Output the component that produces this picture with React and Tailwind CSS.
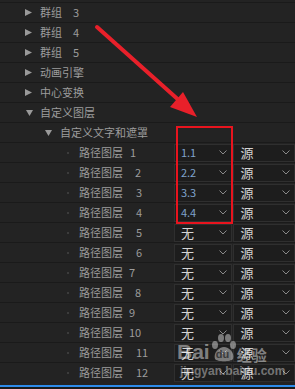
const font = { fontFamily: '"Noto Sans CJK SC", "Liberation Sans", sans-serif' }

function Tri({ down }) {
  return down ? (
    <svg width="7" height="7" viewBox="0 0 7 7" className="shrink-0">
      <path d="M0 1 L7 1 L3.5 7 Z" fill="#9a9a9a" />
    </svg>
  ) : (
    <svg width="7" height="7" viewBox="0 0 7 7" className="shrink-0">
      <path d="M0 0 L7 3.5 L0 7 Z" fill="#9a9a9a" />
    </svg>
  )
}

function Chevron() {
  return (
    <svg width="8" height="5" viewBox="0 0 8 5" className="shrink-0">
      <path d="M0.5 0.5 L4 4 L7.5 0.5" fill="none" stroke="#8a8a8a" strokeWidth="1" />
    </svg>
  )
}

function Select({ value, blue, w }) {
  return (
    <div className={`flex items-center justify-between h-[18px] bg-[#1d1d1d] border border-[#2f2f2f] pl-[6px] pr-[4px] ${w}`}>
      <span className={blue ? 'text-[11px] text-[#7fa3cc]' : 'text-[13px] text-[#d4d4d4]'}>{value}</span>
      <Chevron />
    </div>
  )
}

const groups = [
  { label: '群组', num: '3' },
  { label: '群组', num: '4' },
  { label: '群组', num: '5' },
  { label: '动画引擎' },
  { label: '中心变换' },
]

const paths = [
  { n: '1', gap: 'ml-[7px]', v: '1.1' },
  { n: '2', gap: 'ml-[12px]', v: '2.2' },
  { n: '3', gap: 'ml-[13px]', v: '3.3' },
  { n: '4', gap: 'ml-[13px]', v: '4.4' },
  { n: '5', gap: 'ml-[13px]' },
  { n: '6', gap: 'ml-[13px]' },
  { n: '7', gap: 'ml-[6px]' },
  { n: '8', gap: 'ml-[12px]' },
  { n: '9', gap: 'ml-[6px]' },
  { n: '10', gap: 'ml-[6px]' },
  { n: '11', gap: 'ml-[13px]' },
  { n: '12', gap: 'ml-[13px]' },
]

export default function App() {
  return (
    <div className="relative w-[295px] h-[389px] overflow-hidden bg-[#232323] text-[11px] text-[#9c9c9c]" style={font}>
      <div className="h-[2px]" />
      {groups.map((g, i) => (
        <div key={i} className="h-[20px] border-t border-[#1a1a1a] flex items-center pl-[25px]">
          <Tri />
          <span className="ml-[8px]">{g.label}</span>
          {g.num && <span className="ml-[11px]">{g.num}</span>}
        </div>
      ))}
      <div className="h-[20px] border-t border-[#1a1a1a] flex items-center pl-[26px]">
        <Tri down />
        <span className="ml-[7px]">自定义图层</span>
      </div>
      <div className="h-[20px] border-t border-[#1a1a1a] flex items-center pl-[45px]">
        <Tri down />
        <span className="ml-[8px]">自定义文字和遮罩</span>
      </div>
      {paths.map((p) => (
        <div key={p.n} className="h-[20px] border-t border-[#1a1a1a] flex items-center">
          <div className="w-[175px] flex items-center pl-[67px]">
            <span className="w-[2px] h-[2px] bg-[#3c3c3c]" />
            <span className="ml-[10px]">路径图层</span>
            <span className={p.gap}>{p.n}</span>
          </div>
          <Select value={p.v || '无'} blue={!!p.v} w="w-[58px]" />
          <div className="w-[2px]" />
          <Select value="源" w="w-[62px]" />
        </div>
      ))}
      <div className="h-[3px]" />
      <div className="h-[2px] bg-[#2d8ceb]" />
      <div className="h-[2px] bg-[#1a1a1a]" />

      {/* red highlight box */}
      <div className="absolute left-[176px] top-[126px] w-[57px] h-[98px] border-2 border-[#e8141e]" />

      {/* red arrow */}
      <svg className="absolute left-0 top-0" width="295" height="389" viewBox="0 0 295 389">
        <line x1="97" y1="27" x2="182" y2="103" stroke="#e8202a" strokeWidth="4" strokeLinecap="round" />
        <path d="M197 117 L170 107 L183 92 Z" fill="#e8202a" />
      </svg>

      {/* watermark */}
      <div className="absolute left-[177px] top-[334px] flex items-end text-white/45" style={{ fontFamily: '"Liberation Sans", sans-serif' }}>
        <span className="text-[21px] font-bold leading-none">Bai</span>
        <div className="relative w-[27px] h-[28px]">
          <svg width="27" height="28" viewBox="0 0 27 28" className="absolute left-0 top-0">
            <g fill="rgba(255,255,255,0.42)">
              <ellipse cx="5" cy="11" rx="3" ry="4" />
              <ellipse cx="11" cy="4" rx="3" ry="4" />
              <ellipse cx="18" cy="4" rx="3" ry="4" />
              <ellipse cx="23" cy="11" rx="3" ry="4" />
              <path d="M5 25 C3 19 9 13 14 13 C19 13 25 19 23 25 C21 28 7 28 5 25 Z" />
            </g>
          </svg>
          <span className="absolute left-[6px] bottom-[2px] text-[11px] font-bold text-[#3a3a3a] leading-none">du</span>
        </div>
        <span className="text-[15px] font-bold leading-none" style={font}>经验</span>
      </div>
      <div className="absolute left-[180px] top-[365px] text-[12px] font-bold text-white/40 leading-none" style={{ fontFamily: '"Liberation Sans", sans-serif' }}>
        jingyan.baidu.com
      </div>
    </div>
  )
}
